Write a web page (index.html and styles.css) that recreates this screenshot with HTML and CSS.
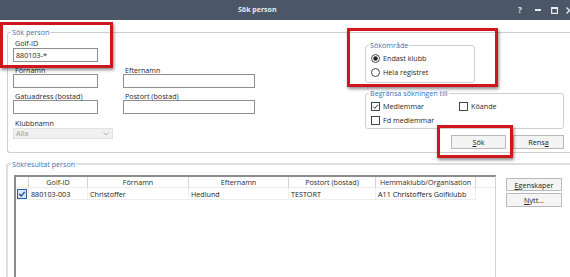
FILE: index.html
```html
<!DOCTYPE html>
<html lang="sv">
<head>
<meta charset="utf-8">
<title>Sök person</title>
<link rel="stylesheet" href="styles.css">
</head>
<body>
<div class="titlebar">
  <div class="title">Sök person</div>
  <div class="controls">
    <span class="ctl-help">?</span>
    <svg class="ctl-min" width="6" height="2" viewBox="0 0 6 2"><rect width="6" height="2" fill="#e9ecef"/></svg>
    <svg class="ctl-max" width="7" height="7" viewBox="0 0 7 7"><rect x="0.6" y="0.6" width="5.8" height="5.8" fill="none" stroke="#e9ecef" stroke-width="1.2"/><rect x="0" y="0" width="7" height="2" fill="#e9ecef"/></svg>
    <svg class="ctl-close" width="4" height="7" viewBox="0 0 4 7"><path d="M0.5 0.5 L4 4 M0.5 6.5 L4 3" stroke="#e9ecef" stroke-width="1.4"/></svg>
  </div>
</div>

<div class="content">
  <div class="group g-search">
    <div class="group-title">Sök person</div>
    <div class="search-body">
      <div class="form">
        <div class="field">
          <div class="lbl first">Golf-ID</div>
          <div class="input">880103-*</div>
        </div>
        <div></div>
        <div class="field">
          <div class="lbl">Förnamn</div>
          <div class="input"></div>
        </div>
        <div class="field">
          <div class="lbl">Efternamn</div>
          <div class="input"></div>
        </div>
        <div class="field">
          <div class="lbl">Gatuadress (bostad)</div>
          <div class="input"></div>
        </div>
        <div class="field">
          <div class="lbl">Postort (bostad)</div>
          <div class="input"></div>
        </div>
        <div class="field">
          <div class="lbl tall">Klubbnamn</div>
          <div class="select">
            <span>Alla</span>
            <svg width="6" height="4" viewBox="0 0 6 4"><path d="M0.5 0.5 L3 3 L5.5 0.5" fill="none" stroke="#a8a8a8" stroke-width="0.9"/></svg>
          </div>
        </div>
      </div>

      <div class="side">
        <div class="group g-area">
          <div class="group-title">Sökområde</div>
          <div class="opt first-opt">
            <svg width="9" height="9" viewBox="0 0 9 9"><circle cx="4.5" cy="4.5" r="4" fill="#fff" stroke="#333" stroke-width="0.9"/><circle cx="4.5" cy="4.5" r="2.2" fill="#222"/></svg>
            <span>Endast klubb</span>
          </div>
          <div class="opt">
            <svg width="9" height="9" viewBox="0 0 9 9"><circle cx="4.5" cy="4.5" r="4" fill="#fff" stroke="#333" stroke-width="0.9"/></svg>
            <span>Hela registret</span>
          </div>
        </div>

        <div class="group g-limit">
          <div class="group-title">Begränsa sökningen till</div>
          <div class="checks">
            <div class="opt">
              <svg width="9" height="9" viewBox="0 0 9 9"><rect x="0.5" y="0.5" width="8" height="8" fill="#fff" stroke="#333" stroke-width="0.9"/><path d="M2 4.6 L3.8 6.4 L7 2.6" fill="none" stroke="#222" stroke-width="0.9"/></svg>
              <span>Medlemmar</span>
            </div>
            <div class="opt">
              <svg width="9" height="9" viewBox="0 0 9 9"><rect x="0.5" y="0.5" width="8" height="8" fill="#fff" stroke="#333" stroke-width="0.9"/></svg>
              <span>Köande</span>
            </div>
            <div class="opt">
              <svg width="9" height="9" viewBox="0 0 9 9"><rect x="0.5" y="0.5" width="8" height="8" fill="#fff" stroke="#333" stroke-width="0.9"/></svg>
              <span>Fd medlemmar</span>
            </div>
          </div>
        </div>

        <div class="btns">
          <div class="btn btn-sok"><u>S</u>ök</div>
          <div class="btn btn-rensa">Rens<u>a</u></div>
        </div>
      </div>
    </div>
  </div>

  <div class="group g-results">
    <div class="group-title">Sökresultat person</div>
    <div class="results-body">
      <div class="grid">
        <div class="row head">
          <div class="cell"></div>
          <div class="cell">Golf-ID</div>
          <div class="cell">Förnamn</div>
          <div class="cell">Efternamn</div>
          <div class="cell">Postort (bostad)</div>
          <div class="cell">Hemmaklubb/Organisation</div>
          <div class="cell last"></div>
        </div>
        <div class="row data">
          <div class="cell chk">
            <svg width="10" height="10" viewBox="0 0 10 10"><rect x="0.5" y="0.5" width="9" height="9" fill="#d6e6f7" stroke="#2c5c9c" stroke-width="1"/><path d="M2.2 5 L4.2 7 L7.8 2.8" fill="none" stroke="#1f4f8f" stroke-width="1.3"/></svg>
          </div>
          <div class="cell">880103-003</div>
          <div class="cell">Christoffer</div>
          <div class="cell">Hedlund</div>
          <div class="cell">TESTORT</div>
          <div class="cell">A11 Christoffers Golfklubb</div>
          <div class="cell last"></div>
        </div>
      </div>
      <div class="side-btns">
        <div class="btn btn-props"><u>E</u>genskaper</div>
        <div class="btn btn-new"><u>N</u>ytt...</div>
      </div>
    </div>
  </div>
</div>

<div class="mark mark-id"></div>
<div class="mark mark-area"></div>
<div class="mark mark-sok"></div>
</body>
</html>
```

FILE: styles.css
```css
html, body {
  margin: 0;
  padding: 0;
}
body {
  position: relative;
  width: 570px;
  height: 277px;
  overflow: hidden;
  background: #ffffff;
  font-family: "Open Sans", "Noto Sans", sans-serif;
  font-size: 7.2px;
  color: #1f1f1f;
}

/* title bar */
.titlebar {
  height: 20px;
  background: #4b5767;
  display: flex;
  align-items: center;
  color: #e9ecef;
}
.title {
  margin-left: 238px;
  font-weight: 700;
  font-size: 7px;
  line-height: 10px;
}
.controls {
  margin-left: auto;
  display: flex;
  align-items: center;
}
.ctl-help {
  font-weight: 700;
  font-size: 8px;
  line-height: 10px;
  width: 6px;
}
.ctl-min { margin-left: 11px; }
.ctl-max { margin-left: 10px; }
.ctl-close { margin-left: 8px; }

/* group boxes */
.content {
  padding-top: 12px;
}
.group {
  border: 1px solid #cfcfcf;
  border-radius: 3px;
  box-sizing: border-box;
}
.group-title {
  width: max-content;
  margin: -6px 0 0 3px;
  padding: 0 1px;
  background: #ffffff;
  line-height: 10px;
  color: #3b72b8;
  white-space: nowrap;
}

.g-search {
  margin-left: 7px;
  width: 563px;
  height: 121px;
  border-right: none;
  border-radius: 3px 0 0 3px;
}
.search-body {
  display: flex;
}
.form {
  padding-left: 5px;
  display: grid;
  grid-template-columns: 85px 132px;
  column-gap: 25px;
  align-content: start;
}
.lbl {
  height: 12px;
  line-height: 16px;
  padding-left: 2px;
  white-space: nowrap;
}
.lbl.first {
  height: 11px;
  line-height: 13px;
}
.lbl.tall {
  height: 14px;
  line-height: 18px;
}
.input {
  height: 14px;
  box-sizing: border-box;
  border: 1px solid #8f8f8f;
  background: #ffffff;
  line-height: 12px;
  padding-left: 2px;
  color: #1e1e1e;
}
.select {
  width: 100px;
  height: 11px;
  box-sizing: border-box;
  background: #f0f0f0;
  border: 1px solid #e2e2e2;
  display: flex;
  align-items: center;
  justify-content: space-between;
  padding: 0 3px 0 2px;
  color: #9a9a9a;
  line-height: 9px;
}

.side {
  margin-left: 110px;
  width: 199px;
  padding-top: 8px;
}
.g-area {
  width: 110px;
  height: 38px;
}
.opt {
  display: flex;
  align-items: center;
  gap: 3px;
  height: 14px;
  white-space: nowrap;
}
.g-area .opt {
  padding-left: 5px;
}
.first-opt {
  margin-top: 1px;
}
.g-limit {
  margin-top: 10px;
  height: 36px;
}
.checks {
  margin-top: 1px;
  padding-left: 5px;
  display: grid;
  grid-template-columns: 88px auto;
}

.btns {
  margin-top: 6px;
  display: flex;
  justify-content: flex-end;
  gap: 7px;
}
.btn {
  height: 14px;
  box-sizing: border-box;
  border: 1px solid #b9b9b9;
  background: #f4f4f4;
  display: flex;
  align-items: center;
  justify-content: center;
  line-height: 10px;
  color: #222;
}
.btn-sok { width: 55px; }
.btn-rensa { width: 51px; }

/* results */
.g-results {
  margin-top: 10px;
  margin-left: 6px;
  width: 564px;
  height: 114px;
  border: 2px solid #dedede;
  border-right: none;
  border-bottom: none;
  border-radius: 3px 0 0 0;
}
.results-body {
  display: flex;
  align-items: flex-start;
  margin-top: 6px;
}
.grid {
  margin-left: 6px;
  width: 482px;
  height: 102px;
  box-sizing: border-box;
  border-top: 2px solid #8c8c8c;
  border-left: 2px solid #8c8c8c;
  border-right: 1px solid #d3d3d3;
}
.row {
  display: grid;
  grid-template-columns: 13px 59px 101px 100px 87px 100px 1fr;
}
.cell {
  box-sizing: border-box;
  border-right: 1px solid #d2d2d2;
  white-space: nowrap;
  overflow: hidden;
}
.cell.last {
  border-right: none;
}
.head .cell {
  height: 11px;
  line-height: 11px;
  text-align: center;
  border-bottom: 1px solid #ececec;
  color: #2e2e2e;
}
.data .cell {
  height: 12px;
  line-height: 12px;
  padding-left: 2px;
  border-right-color: #ededed;
  border-bottom: 1px solid #ededed;
  color: #1a1a1a;
}
.data .cell.last {
  border-bottom: none;
}
.data .chk {
  padding-left: 1px;
  display: flex;
  align-items: center;
}
.side-btns {
  margin-left: 10px;
  margin-top: 3px;
  display: flex;
  flex-direction: column;
  gap: 2px;
}
.btn-props {
  width: 56px;
  height: 13px;
}
.btn-new {
  width: 56px;
}

/* red annotation frames */
.mark {
  position: absolute;
  border: 3px solid #d0161d;
  box-shadow: 1px 2px 3px rgba(0, 0, 0, 0.45);
  box-sizing: border-box;
}
.mark-id {
  left: 0;
  top: 22px;
  width: 113px;
  height: 46px;
}
.mark-area {
  left: 347px;
  top: 28px;
  width: 151px;
  height: 59px;
}
.mark-sok {
  left: 437px;
  top: 125px;
  width: 76px;
  height: 33px;
}
```
